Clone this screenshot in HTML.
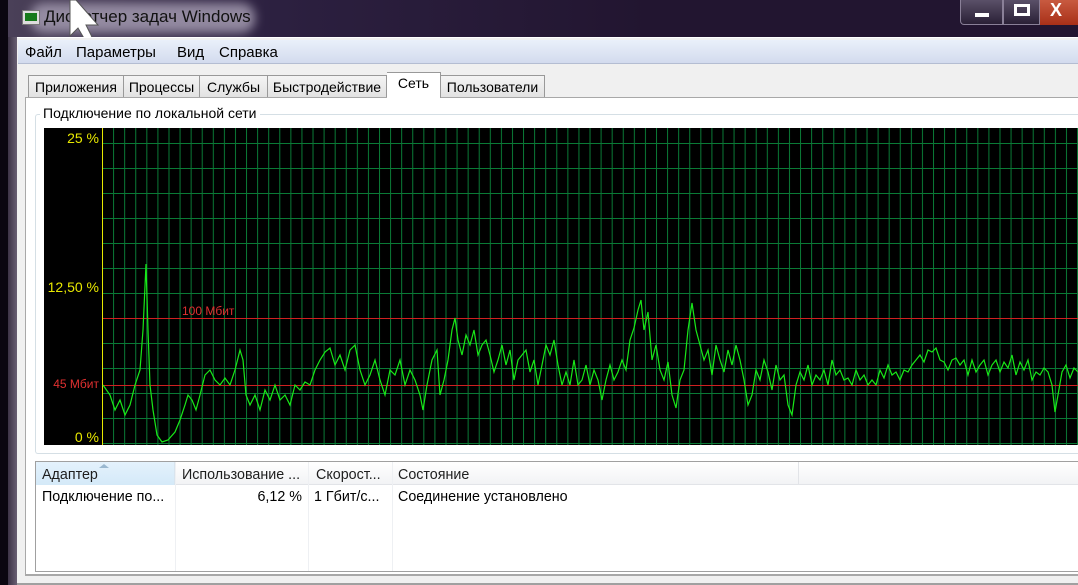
<!DOCTYPE html>
<html><head><meta charset="utf-8"><style>
*{margin:0;padding:0;box-sizing:border-box}
body{width:1078px;height:585px;overflow:hidden;background:#221530;font-family:"Liberation Sans","DejaVu Sans",sans-serif;font-size:13px;color:#000;position:relative}
.abs{position:absolute}
.tab{position:absolute;top:0;height:22px;border:1px solid #999;border-bottom:none;background:linear-gradient(#f4f4f4,#e2e2e2);text-align:center;padding-top:3px;font-size:14px;white-space:nowrap}
.m{position:absolute;top:44px;font-size:15px}
</style></head><body>
<div class="abs" style="left:0;top:0;width:8px;height:585px;background:#0a0610"></div>
<div class="abs" style="left:8px;top:0;width:10px;height:585px;background:linear-gradient(90deg,#3c3346,#6e6478)"></div>
<div class="abs" style="left:8px;top:0;width:1070px;height:37px;background:linear-gradient(90deg,#4a4058 0%,#2c2040 25%,#221530 60%)"></div>
<div class="abs" style="left:30px;top:3px;width:225px;height:30px;border-radius:14px;background:#9d94aa;filter:blur(5px);opacity:.9"></div>
<div class="abs" style="left:22px;top:10px;width:18px;height:15px;background:#ddd;border:1px solid #777"><div style="margin:2px;height:8px;background:#157a1a"></div></div>
<div class="abs" style="left:44px;top:7px;font-size:17px;color:#111">Диспетчер задач Windows</div>
<svg class="abs" style="left:68px;top:0" width="50" height="42"><path d="M2 0 L2 36 L10 28 L17 40 L24 37 L18 25 L30 25 L8 0 Z" fill="#fff" stroke="#555" stroke-width="1"/></svg>
<div class="abs" style="left:960px;top:0;width:43px;height:25px;border:1px solid #8a8098;border-top:none;border-radius:0 0 0 4px;background:linear-gradient(#5a5068,#2a2036)"><div style="position:absolute;left:14px;top:13px;width:14px;height:4px;background:#fff"></div></div>
<div class="abs" style="left:1003px;top:0;width:37px;height:25px;border:1px solid #8a8098;border-top:none;background:linear-gradient(#5a5068,#2a2036)"><div style="position:absolute;left:10px;top:4px;width:16px;height:12px;border:3px solid #fff"></div></div>
<div class="abs" style="left:1040px;top:0;width:38px;height:25px;background:linear-gradient(#c85a40,#a83018);color:#fff;font-weight:bold;font-size:18px;padding-left:10px">X</div>
<div class="abs" style="left:17px;top:37px;width:1061px;height:548px;background:#f0f0f0;border-top:1px solid #fff"></div>
<div class="abs" style="left:18px;top:40px;width:1060px;height:24px;background:linear-gradient(#eaf0fa,#d3dbee);border-bottom:1px solid #b4bdd2"></div>
<div class="m" style="left:25px">Файл</div>
<div class="m" style="left:76px">Параметры</div>
<div class="m" style="left:177px">Вид</div>
<div class="m" style="left:219px">Справка</div>
<div class="abs" style="left:25px;top:97px;width:1053px;height:478px;background:#fff;border:1px solid #a8a8a8;border-right:none"></div>
<div class="abs" style="left:0;top:75px;width:1078px;height:23px">
<div class="tab" style="left:28px;width:96px">Приложения</div>
<div class="tab" style="left:124px;width:76px;border-left:none">Процессы</div>
<div class="tab" style="left:200px;width:68px;border-left:none">Службы</div>
<div class="tab" style="left:268px;width:119px;border-left:none">Быстродействие</div>
<div class="tab" style="left:387px;width:54px;top:-3px;height:26px;background:#fff;border-left:none;padding-top:2px">Сеть</div>
<div class="tab" style="left:441px;width:104px;border-left:none">Пользователи</div>
</div>
<div class="abs" style="left:35px;top:114px;width:1043px;height:340px;border:1px solid #d5dfe5;border-right:none;border-radius:3px 0 0 3px"></div>
<div class="abs" style="left:40px;top:105px;background:#fff;padding:0 3px;font-size:14px">Подключение по локальной сети</div>
<svg class="abs" style="left:44px;top:128px" width="1034" height="317">
<defs>
<pattern id="v" x="58" y="0" width="11.08" height="317" patternUnits="userSpaceOnUse"><rect x="0" y="0" width="1" height="317" fill="#0a7a36"/></pattern>
<pattern id="h" x="0" y="15" width="1034" height="25" patternUnits="userSpaceOnUse"><rect x="0" y="0" width="1034" height="1" fill="#0a7a36"/></pattern>
</defs>
<rect width="1034" height="317" fill="#000"/>
<rect x="59" y="0" width="975" height="317" fill="url(#v)"/>
<rect x="59" y="1" width="975" height="316" fill="url(#h)"/>
<rect x="58" y="0" width="1" height="317" fill="#e8e800"/>
<rect x="59" y="190" width="975" height="1" fill="#d02020"/>
<rect x="59" y="257" width="975" height="1" fill="#d02020"/>
<g font-size="14" fill="#e8e800" text-anchor="end"><text x="55" y="15">25 %</text><text x="55" y="164">12,50 %</text><text x="55" y="314">0 %</text></g>
<text x="138" y="187" font-size="12" fill="#e03030">100 Мбит</text>
<text x="55" y="260" font-size="12" fill="#e03030" text-anchor="end">45 Мбит</text>
<polyline transform="translate(-44,-128)" fill="none" stroke="#18e818" stroke-width="1.2" points="103,385 110,395 115,410 120,400 125,415 130,405 135,385 140,370 143,330 146,264 148,330 150,385 153,410 157,435 162,442 168,440 175,432 180,420 185,405 188,395 192,400 196,410 200,395 205,375 210,370 215,380 220,385 225,378 230,385 235,370 240,350 243,360 246,395 250,405 255,395 260,410 265,390 270,400 275,385 280,400 285,395 290,405 295,385 300,390 305,382 310,385 315,370 320,360 325,352 330,348 335,365 340,355 345,370 350,350 355,345 360,370 365,385 370,375 375,360 380,380 385,395 390,370 395,375 400,360 405,385 410,370 415,380 420,395 423,410 427,385 432,360 437,350 440,395 444,380 448,360 452,330 455,318 458,340 462,355 466,335 470,345 474,330 478,355 482,345 486,340 490,355 494,372 498,360 502,345 506,365 510,350 514,380 518,360 522,355 526,350 530,372 534,360 538,385 542,365 546,345 550,355 554,340 558,365 562,385 566,372 570,385 574,360 578,385 582,380 586,365 590,385 594,370 598,380 602,400 606,380 610,365 614,380 618,372 622,360 626,370 630,340 634,328 638,310 641,300 644,330 648,312 652,360 656,345 660,370 664,380 668,362 672,395 676,408 680,380 684,370 688,330 692,303 696,330 700,345 704,360 708,350 712,375 716,345 720,360 724,372 728,350 732,365 736,345 740,360 744,380 748,405 752,395 756,370 760,380 764,360 768,372 772,390 776,365 780,380 784,375 788,405 792,415 796,385 800,372 804,380 808,365 812,385 816,375 820,380 824,370 828,385 832,360 836,375 840,370 844,380 848,378 852,385 856,370 860,380 864,375 868,385 872,380 876,385 880,370 884,378 888,365 892,375 896,372 900,380 904,370 908,372 912,365 916,360 920,355 924,362 928,350 932,352 936,348 940,360 944,362 948,370 952,360 956,358 960,365 964,360 968,375 972,360 976,372 980,365 984,360 988,375 992,365 996,360 1000,372 1004,362 1008,368 1012,355 1016,375 1020,362 1024,370 1028,360 1032,380 1036,372 1040,375 1044,368 1048,372 1052,385 1055,412 1058,395 1062,372 1066,365 1070,378 1074,368 1078,372"/>
</svg>
<div class="abs" style="left:35px;top:461px;width:1043px;height:111px;border:1px solid #a0a0a0;border-right:none;background:#fff"></div>
<div class="abs" style="left:36px;top:462px;width:1042px;height:23px;background:linear-gradient(#fff,#f2f3f5);border-bottom:1px solid #e2e4e8"></div>
<div class="abs" style="left:36px;top:462px;width:139px;height:23px;background:linear-gradient(#e4f2fc,#d4e9f8);border-right:1px solid #d8e4ee"></div>
<div class="abs" style="left:175px;top:462px;width:1px;height:109px;background:#eef0f3"></div>
<div class="abs" style="left:308px;top:462px;width:1px;height:109px;background:#eef0f3"></div>
<div class="abs" style="left:392px;top:462px;width:1px;height:109px;background:#eef0f3"></div>
<div class="abs" style="left:798px;top:462px;width:1px;height:23px;background:#e2e4e8"></div>
<svg class="abs" style="left:98px;top:463px" width="12" height="6"><path d="M1 5 L6 1 L11 5 Z" fill="#9ab8d0"/></svg>
<div class="abs" style="left:42px;top:467px;font-size:14.3px;color:#1e1e1e">Адаптер</div>
<div class="abs" style="left:182px;top:467px;font-size:14.3px;color:#1e1e1e">Использование ...</div>
<div class="abs" style="left:316px;top:467px;font-size:14.3px;color:#1e1e1e">Скорост...</div>
<div class="abs" style="left:398px;top:467px;font-size:14.3px;color:#1e1e1e">Состояние</div>
<div class="abs" style="left:42px;top:489px;font-size:14.3px">Подключение по...</div>
<div class="abs" style="left:175px;top:489px;width:127px;text-align:right;font-size:14.3px">6,12 %</div>
<div class="abs" style="left:314px;top:489px;font-size:14.3px">1 Гбит/с...</div>
<div class="abs" style="left:398px;top:489px;font-size:14.3px">Соединение установлено</div>
<div class="abs" style="left:25px;top:575px;width:1053px;height:1px;background:#a8a8a8"></div>
<div class="abs" style="left:17px;top:583px;width:1061px;height:2px;background:#a0a0a0"></div>
</body></html>
